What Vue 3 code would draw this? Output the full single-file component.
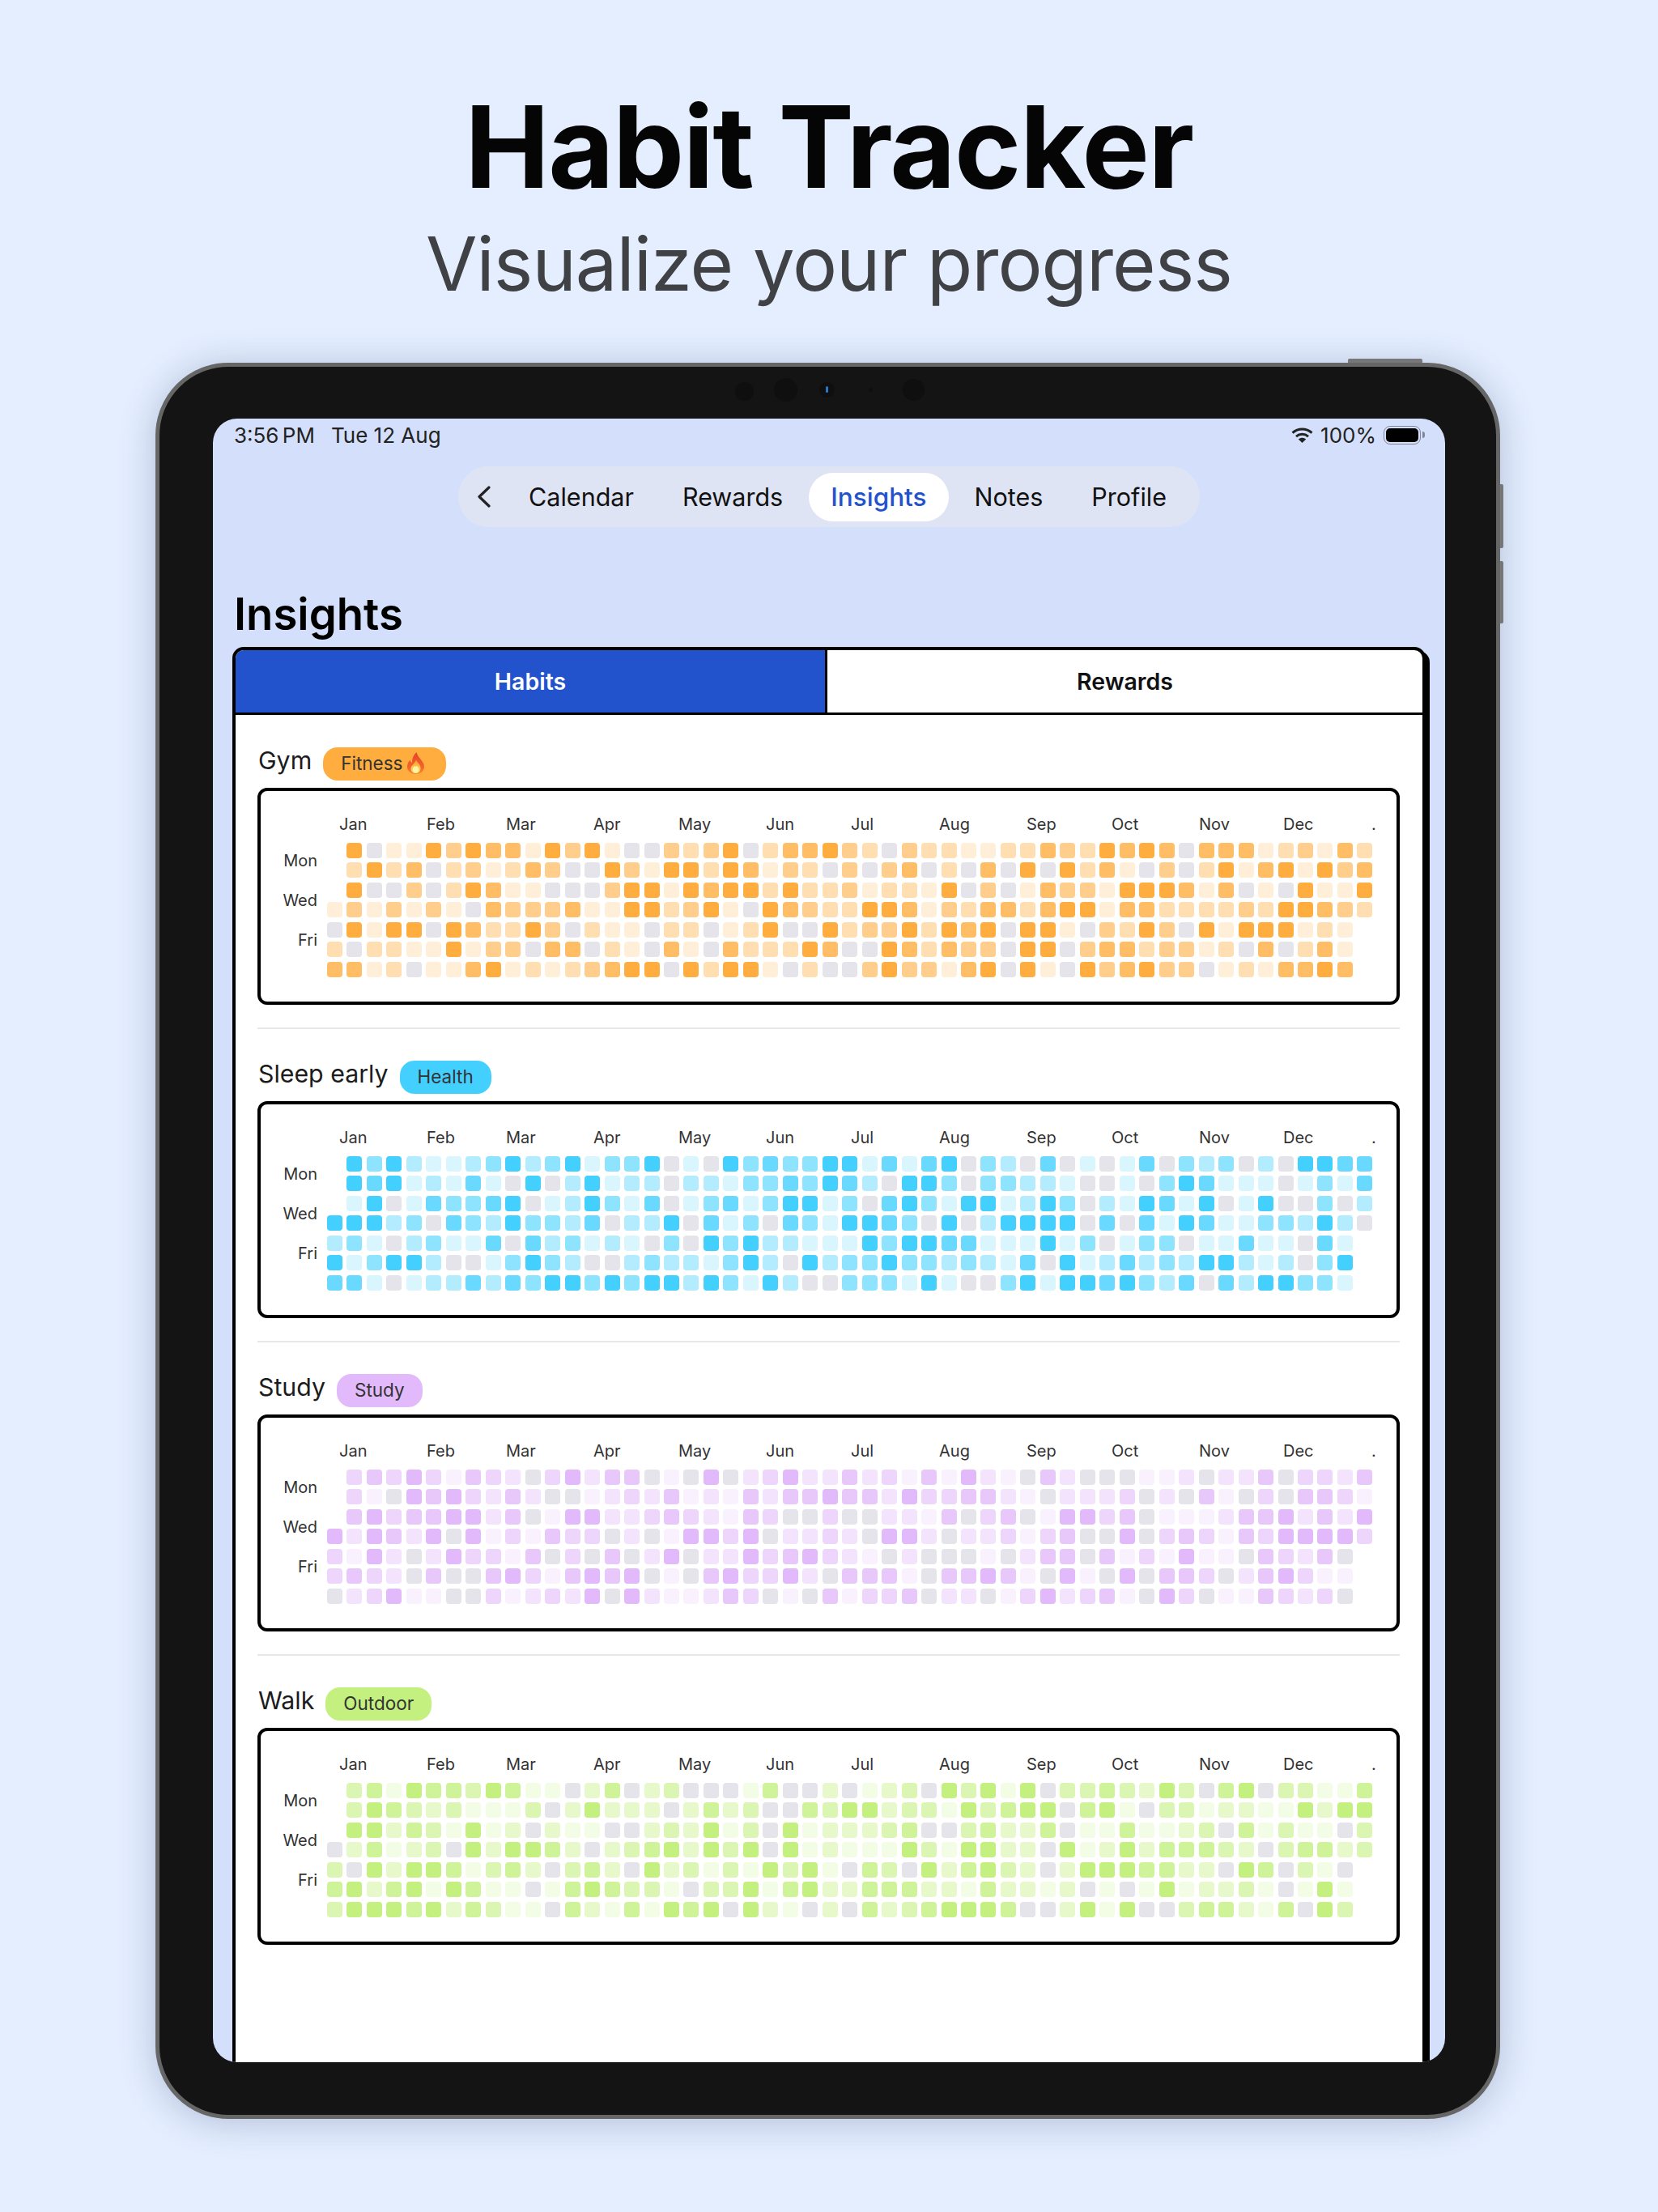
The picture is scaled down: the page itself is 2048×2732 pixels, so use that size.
<script setup>
const navItems = ["Calendar", "Rewards", "Insights", "Notes", "Profile"];

// x offset of every month label from the first column of the grid
const months = [
  ["Jan", 16], ["Feb", 124], ["Mar", 222], ["Apr", 330], ["May", 435], ["Jun", 543],
  ["Jul", 648], ["Aug", 757], ["Sep", 865], ["Oct", 970], ["Nov", 1078], ["Dec", 1182],
  [".", 1291],
].map(([name, x], i, list) => ({
  name,
  width: i < list.length - 1 ? list[i + 1][1] - x : 20,
}));

const days = ["Mon", "Wed", "Fri"];

// one string per weekday, one char per week: . = no cell, 0 = missed, 1-5 = intensity
const habits = [
  {
    name: "Gym",
    tag: "Fitness",
    flame: true,
    color: "#ffad3f",
    rows: [
      ".501153544153510032350244" + "5320322112243254540444123142",
      ".252402312430053155254132" + "0303402040505241030251451534",
      ".500302541100035515455252" + "2312215030143315554140105115",
      "1313131043334115523510543" + "2255413244245514422223255432",
      "0515505422530211022012500" + "52335254505510325305" + "1555121.",
      "2022115133044021041042225" + "40054243305503442331" + "2040241.",
      "4412011451212345505255102" + "00353314505105345330" + "1214454.",
    ],
  },
  {
    name: "Sleep early",
    tag: "Health",
    color: "#43d0ff",
    rows: [
      ".535211235235133501053433" + "5514145032040101403230205544",
      ".545121410502512202213343" + "5420553033221001035411101314",
      ".150143345012531401341355" + "1304531551253021541501500302",
      "5552304325332402250413043" + "1554305025555040415411332520",
      "2310231140423121030535221" + "11535544111513013301" + "1411041.",
      "5135520013532002322135205" + "23353323214051242325" + "5212035.",
      "4410122424355353552531520" + "03331510035155453240" + "4255331.",
    ],
  },
  {
    name: "Study",
    tag: "Study",
    color: "#e2b9fa",
    rows: [
      ".343531432035244010502352" + "2423141521042000112022403324",
      ".310545324200123241214244" + "5442533442102223020410304431",
      ".453445524015522343214300" + "3002214034015534011124452425",
      "5254250513143302015535022" + "3205520223134005034314355553",
      "3152025331403040250225345" + "32102000102440413151" + "1043240.",
      "3432040045314545010453352" + "04441044541051050443" + "0245311.",
      "0235110031232505211243010" + "41334022013523410530" + "1143230.",
    ],
  },
  {
    name: "Walk",
    tag: "Outdoor",
    color: "#c3f07e",
    rows: [
      ".341544354110240230001400" + "2012305351503343253045033114",
      ".354323111302522202423004" + "3552331534550451033122115255",
      ".552431512021100232513051" + "2223400342240114112304131103",
      "0241230525542023452535051" + "2111531552205125244432034423",
      "3052554134203420523131535" + "10430524532025554422" + "0540310.",
      "4524515411014543310335145" + "22444221422120101512" + "2310151.",
      "3555452431104214154505210" + "20423455540025150034" + "4214053.",
    ],
  },
];

// grid is filled column by column, so flip the rows into a flat list
function cellsOf(habit) {
  const cells = [];
  for (let col = 0; col < 53; col++) {
    for (let row = 0; row < 7; row++) {
      cells.push(habit.rows[row][col] ?? ".");
    }
  }
  return cells;
}
</script>

<template>
  <div class="page">
    <header class="hero">
      <h1 class="hero-title">Habit Tracker</h1>
      <p class="hero-sub">Visualize your progress</p>
    </header>

    <div class="device">
      <span class="btn-top" />
      <span class="btn-side one" />
      <span class="btn-side two" />
      <span class="cam c1" />
      <span class="cam c2" />
      <span class="cam c3" />
      <span class="cam c4" />
      <span class="cam c5" />

      <div class="screen">
        <div class="status">
          <div class="status-left">
            <span class="time">3:56 PM</span>
            <span>Tue 12 Aug</span>
          </div>
          <div class="status-right">
            <svg class="wifi" width="27" height="19" viewBox="0 0 27 19" fill="none">
              <path d="M1.5 6.6C8.4 .4 18.6 .4 25.5 6.6" stroke="#222" stroke-width="3" />
              <path d="M6 11.2C10.4 7.4 16.6 7.4 21 11.2" stroke="#222" stroke-width="3" />
              <path d="M13.5 19L8.8 14.4C11.6 12.2 15.4 12.2 18.2 14.4Z" fill="#222" />
            </svg>
            <span>100%</span>
            <span class="battery"><span class="battery-fill" /></span>
          </div>
        </div>

        <nav class="nav">
          <svg class="back" width="17" height="27" viewBox="0 0 17 27" fill="none">
            <path d="M15 2L3 13.5L15 25" stroke="#222" stroke-width="3.2" stroke-linecap="round" stroke-linejoin="round" />
          </svg>
          <span
            v-for="item in navItems"
            :key="item"
            class="nav-item"
            :class="{ active: item === 'Insights' }"
          >{{ item }}</span>
        </nav>

        <h2 class="page-title">Insights</h2>

        <div class="panel">
          <div class="tabs">
            <div class="tab on">Habits</div>
            <div class="tab">Rewards</div>
          </div>

          <div class="habits">
            <section v-for="habit in habits" :key="habit.name" class="habit">
              <div class="habit-head">
                <span class="habit-name">{{ habit.name }}</span>
                <span class="tag" :style="{ background: habit.color }">
                  {{ habit.tag }}
                  <svg v-if="habit.flame" class="flame" width="23" height="27" viewBox="0 0 23 27">
                    <defs>
                      <linearGradient id="flameOuter" x1="0" y1="0" x2="0" y2="1">
                        <stop offset="0" stop-color="#e8412a" />
                        <stop offset="0.7" stop-color="#f2662a" />
                        <stop offset="1" stop-color="#f98a2c" />
                      </linearGradient>
                      <linearGradient id="flameInner" x1="0" y1="0" x2="0" y2="1">
                        <stop offset="0" stop-color="#fb9a2e" />
                        <stop offset="1" stop-color="#ffe667" />
                      </linearGradient>
                    </defs>
                    <path d="M12.5 0C13.5 4.5 16 6.5 18.5 10C20.5 12.5 22 15 22 18C22 23 17.5 27 11.5 27C5.5 27 1 23 1 17.8C1 14.5 2.5 12 4.5 9.8C5 11.5 5.6 12.5 7 13.2C6.6 8 8.8 3.5 12.5 0Z" fill="url(#flameOuter)" />
                    <path d="M12 9.5C12.8 12.5 17.5 15 17.5 19.6C17.5 23.6 15 26 11.5 26C8 26 5.5 23.6 5.5 20C5.5 16.5 10.5 14 12 9.5Z" fill="url(#flameInner)" />
                    <ellipse cx="11.5" cy="21.5" rx="3.6" ry="4.2" fill="#fff3a8" />
                  </svg>
                </span>
              </div>

              <div class="heatmap">
                <div class="months">
                  <span
                    v-for="m in months"
                    :key="m.name"
                    class="month"
                    :style="{ width: m.width + 'px' }"
                  >{{ m.name }}</span>
                </div>
                <div class="days">
                  <span v-for="d in days" :key="d" class="day">{{ d }}</span>
                </div>
                <div class="cells" :style="{ '--c': habit.color }">
                  <i
                    v-for="(level, i) in cellsOf(habit)"
                    :key="i"
                    class="cell"
                    :class="level === '.' ? 'blank' : 'lv' + level"
                  />
                </div>
              </div>
            </section>
          </div>
        </div>
      </div>
    </div>
  </div>
</template>

<style>
html,
body {
  margin: 0;
  background: #e4eeff;
}
</style>

<style scoped>
.page {
  width: 2048px;
  height: 2732px;
  overflow: hidden;
  background: #e4eeff;
  font-family: Inter, "Liberation Sans", sans-serif;
  color: #111;
}

.hero {
  height: 448px;
  box-sizing: border-box;
  padding-top: 96px;
  text-align: center;
}

.hero-title {
  margin: 0;
  font-size: 140px;
  line-height: 170px;
  letter-spacing: -1.5px;
  font-weight: 700;
  color: #050505;
}

.hero-sub {
  margin: 5px 0 0;
  font-size: 92px;
  line-height: 110px;
  letter-spacing: -1px;
  font-weight: 400;
  color: #3f4144;
}

.device {
  position: relative;
  box-sizing: border-box;
  width: 1661px;
  height: 2169px;
  margin-left: 192px;
  padding: 64px 63px 65px 66px;
  background: #141414;
  border: 5px solid #666;
  border-radius: 90px;
  box-shadow: 0 4px 44px rgba(70, 90, 130, 0.32);
}

.btn-top {
  position: absolute;
  top: -10px;
  left: 1468px;
  width: 92px;
  height: 5px;
  background: #777;
  border-radius: 2px 2px 0 0;
}

.btn-side {
  position: absolute;
  right: -9px;
  width: 4px;
  background: #777;
  border-radius: 0 2px 2px 0;
}

.btn-side.one {
  top: 145px;
  height: 79px;
}

.btn-side.two {
  top: 240px;
  height: 77px;
}

.cam {
  position: absolute;
  border-radius: 50%;
  background: #0f0f0f;
}

.c1 {
  left: 711px;
  top: 19px;
  width: 23px;
  height: 23px;
}

.c2 {
  left: 759px;
  top: 14px;
  width: 29px;
  height: 29px;
}

.c3 {
  left: 815px;
  top: 19px;
  width: 19px;
  height: 19px;
}

.c3::after {
  content: "";
  position: absolute;
  left: 8px;
  top: 5px;
  width: 3px;
  height: 8px;
  border-radius: 2px;
  background: #2a78c4;
}

.c4 {
  left: 876px;
  top: 26px;
  width: 5px;
  height: 5px;
}

.c5 {
  left: 918px;
  top: 15px;
  width: 27px;
  height: 27px;
}

.screen {
  height: 100%;
  border-radius: 30px;
  overflow: hidden;
  background: #d4e0fb;
}

.status {
  display: flex;
  justify-content: space-between;
  align-items: center;
  height: 40px;
  padding: 0 30px 0 26px;
  font-size: 26px;
  color: #222;
}

.status-left {
  display: flex;
  gap: 20px;
}

.time {
  word-spacing: -3px;
}

.status-right {
  display: flex;
  align-items: center;
  gap: 9px;
}

.battery {
  position: relative;
  box-sizing: border-box;
  display: block;
  width: 46px;
  height: 23px;
  padding: 2px;
  border: 1.5px solid #80869a;
  border-radius: 8px;
}

.battery::after {
  content: "";
  position: absolute;
  right: -6px;
  top: 6px;
  width: 3px;
  height: 8px;
  border-radius: 0 3px 3px 0;
  background: #80869a;
}

.battery-fill {
  display: block;
  height: 100%;
  border-radius: 5px;
  background: #000;
}

.nav {
  display: flex;
  align-items: center;
  gap: 4px;
  width: max-content;
  height: 75px;
  box-sizing: border-box;
  margin: 19px auto 0;
  padding: 0 13px 0 23px;
  border-radius: 38px;
  background: #dfe4f4;
}

.back {
  margin-right: 15px;
}

.nav-item {
  padding: 0 28px;
  height: 60px;
  line-height: 60px;
  border-radius: 30px;
  font-size: 30.5px;
  color: #111;
}

.nav-item.active {
  padding: 0 27px;
  background: #fff;
  color: #2353cc;
  font-size: 31.5px;
  font-weight: 500;
}

.page-title {
  margin: 77px 0 11px 26px;
  font-size: 54.5px;
  line-height: 60px;
  font-weight: 600;
  color: #000;
}

.panel {
  box-sizing: border-box;
  width: 1474px;
  min-height: 1760px;
  margin-left: 24px;
  background: #fff;
  border: 4px solid #000;
  border-radius: 14px;
  box-shadow: 5px 5px 0 #000;
  overflow: hidden;
}

.tabs {
  display: flex;
  height: 80px;
  border-bottom: 3px solid #000;
  box-sizing: border-box;
}

.tab {
  flex: 1;
  display: flex;
  align-items: center;
  justify-content: center;
  font-size: 28.5px;
  font-weight: 600;
  color: #111;
}

.tab.on {
  flex: 0 0 731px;
  box-sizing: border-box;
  background: #2353cc;
  color: #fff;
  border-right: 3px solid #000;
}

.habits {
  padding: 40px 28px 0 27px;
}

.habit + .habit {
  margin-top: 28px;
  padding-top: 39px;
  border-top: 2px solid #e6e8ec;
}

.habit-head {
  display: flex;
  align-items: flex-start;
  gap: 15px;
  height: 41px;
  margin-bottom: 9px;
}

.habit-name {
  font-size: 30.3px;
  line-height: 32px;
  margin-left: 1px;
  color: #1c1c1c;
}

.tag {
  display: flex;
  align-items: center;
  gap: 5px;
  box-sizing: border-box;
  height: 41px;
  margin-left: -1px;
  padding: 0 22px 2px;
  border-radius: 18px;
  font-size: 22.5px;
  color: #333;
}

.flame {
  margin-right: 4px;
}

.heatmap {
  box-sizing: border-box;
  display: grid;
  grid-template-columns: 70px 1fr;
  grid-template-rows: 24px auto;
  column-gap: 12px;
  row-gap: 11px;
  height: 268px;
  padding-top: 29px;
  border: 4px solid #000;
  border-radius: 12px;
  background: #fff;
}

.months {
  grid-column: 2;
  display: flex;
  padding-left: 15px;
}

.month {
  flex: none;
  font-size: 20px;
  line-height: 24px;
  color: #333;
}

.days {
  display: flex;
  flex-direction: column;
  padding-top: 10px;
}

.day {
  height: 49px;
  font-size: 20px;
  line-height: 24px;
  text-align: right;
  color: #333;
}

.cells {
  display: grid;
  grid-auto-flow: column;
  grid-template-rows: repeat(7, 19px);
  grid-auto-columns: 19px;
  gap: 5.48px;
}

.cell {
  display: block;
  border-radius: 4px;
  background: var(--c);
}

.cell.blank {
  background: none;
}

.cell.lv0 {
  background: #e4e4ea;
}

.cell.lv1 {
  opacity: 0.2;
}

.cell.lv2 {
  opacity: 0.4;
}

.cell.lv3 {
  opacity: 0.6;
}

.cell.lv4 {
  opacity: 0.8;
}
</style>
